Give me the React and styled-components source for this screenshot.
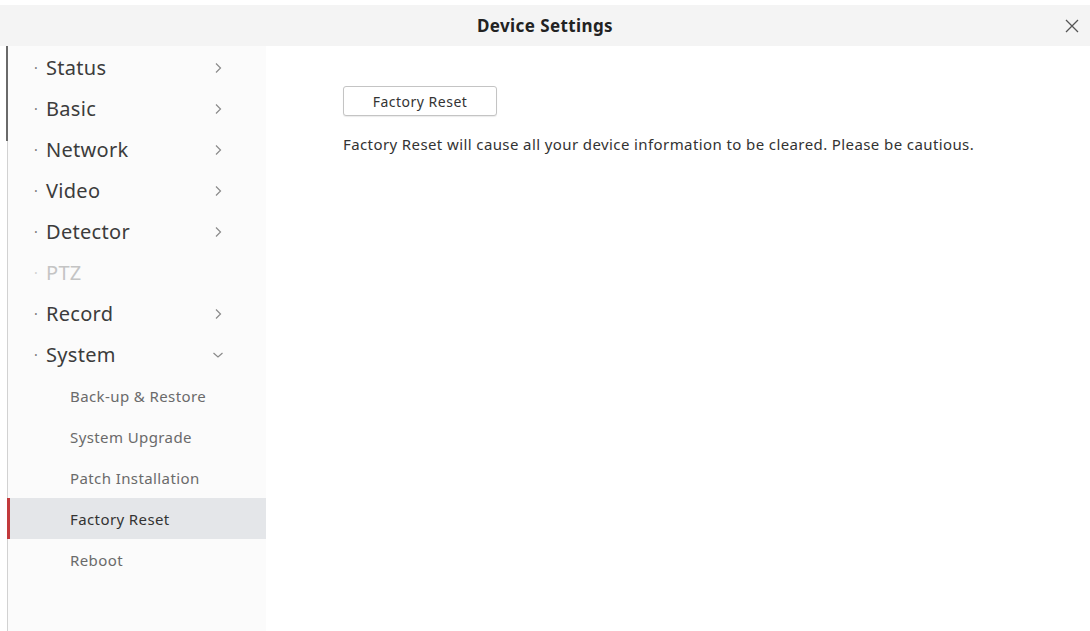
import React from 'react';
import styled, { createGlobalStyle } from 'styled-components';

const GlobalStyle = createGlobalStyle`
  html, body {
    margin: 0;
    padding: 0;
    background: #fff;
  }
  body {
    font-family: "Noto Sans", "Open Sans", sans-serif;
    color: #333;
  }
`;

const Window = styled.div`
  position: relative;
  width: 1090px;
  height: 631px;
  padding-top: 5px;
  box-sizing: border-box;
  display: flex;
  flex-direction: column;
  overflow: hidden;
`;

const Header = styled.div`
  height: 41px;
  background: #f4f4f4;
  display: flex;
  align-items: center;
  justify-content: center;
  position: relative;
`;

const Title = styled.div`
  font-size: 17px;
  font-weight: 700;
  letter-spacing: 0.4px;
  color: #222;
`;

const Close = styled.button`
  position: absolute;
  right: 9px;
  top: 12px;
  width: 18px;
  height: 18px;
  padding: 0;
  border: none;
  background: none;
  cursor: pointer;
`;

const Body = styled.div`
  flex: 1;
  display: flex;
  margin-left: 7px;
  border-left: 1px solid #d2d2d2;
`;

const Sidebar = styled.div`
  width: 258px;
  background: #fbfbfb;
  display: flex;
  flex-direction: column;
  padding-top: 1px;
`;

const NavItem = styled.div`
  height: 41px;
  display: flex;
  align-items: center;
  padding-left: 26px;
  padding-right: 42px;
  font-size: 20px;
  letter-spacing: 0.3px;
  color: ${p => (p.disabled ? '#c4c4c4' : '#3c3c3c')};
`;

const Dot = styled.span`
  width: 12px;
  font-size: 14px;
  color: ${p => (p.disabled ? '#d0d0d0' : '#777')};
`;

const Label = styled.span`
  flex: 1;
`;

const SubItem = styled.div`
  position: relative;
  height: 41px;
  display: flex;
  align-items: center;
  padding-left: 62px;
  font-size: 15px;
  letter-spacing: 0.4px;
  color: ${p => (p.active ? '#333' : '#6a6a6a')};
  background: ${p => (p.active ? '#e4e6e9' : 'transparent')};
`;

const ActiveMark = styled.span`
  position: absolute;
  left: -1px;
  top: 0;
  bottom: 0;
  width: 3px;
  background: #c23a3c;
`;

const ScrollThumb = styled.span`
  position: absolute;
  left: 6px;
  top: 5px;
  width: 2px;
  height: 136px;
  background: #6a6a6a;
`;

const Content = styled.div`
  flex: 1;
  padding: 40px 0 0 77px;
`;

const ResetButton = styled.button`
  width: 154px;
  height: 30px;
  border: 1px solid #c4c4c4;
  border-radius: 3px;
  background: #fff;
  font-family: inherit;
  font-size: 14px;
  letter-spacing: 0.5px;
  color: #333;
  box-shadow: 0 1px 1px rgba(0, 0, 0, 0.08);
  cursor: pointer;
`;

const Message = styled.p`
  margin: 18px 0 0;
  font-size: 15px;
  letter-spacing: 0.4px;
  color: #333;
`;

const Chevron = ({ down }) => (
  <svg width="12" height="12" viewBox="0 0 12 12">
    <path
      d={down ? 'M1.5 4 L6 8 L10.5 4' : 'M4 1.5 L8.5 6 L4 10.5'}
      fill="none"
      stroke="#8a8a8a"
      strokeWidth="1.2"
    />
  </svg>
);

const menu = [
  { name: 'Status', arrow: true },
  { name: 'Basic', arrow: true },
  { name: 'Network', arrow: true },
  { name: 'Video', arrow: true },
  { name: 'Detector', arrow: true },
  { name: 'PTZ', disabled: true },
  { name: 'Record', arrow: true },
  { name: 'System', open: true },
];

const subItems = ['Back-up & Restore', 'System Upgrade', 'Patch Installation', 'Factory Reset', 'Reboot'];

const App = () => (
  <>
    <GlobalStyle />
    <Window>
      <ScrollThumb />
      <Header>
        <Title>Device Settings</Title>
        <Close>
          <svg width="18" height="18" viewBox="0 0 18 18">
            <path d="M3 3 L15 15 M15 3 L3 15" stroke="#555" strokeWidth="1.3" />
          </svg>
        </Close>
      </Header>
      <Body>
        <Sidebar>
          {menu.map(item => (
            <NavItem key={item.name} disabled={item.disabled}>
              <Dot disabled={item.disabled}>·</Dot>
              <Label>{item.name}</Label>
              {item.arrow && <Chevron />}
              {item.open && <Chevron down />}
            </NavItem>
          ))}
          {subItems.map(name => (
            <SubItem key={name} active={name === 'Factory Reset'}>
              {name === 'Factory Reset' && <ActiveMark />}
              {name}
            </SubItem>
          ))}
        </Sidebar>
        <Content>
          <ResetButton>Factory Reset</ResetButton>
          <Message>
            Factory Reset will cause all your device information to be cleared. Please be cautious.
          </Message>
        </Content>
      </Body>
    </Window>
  </>
);

export default App;
